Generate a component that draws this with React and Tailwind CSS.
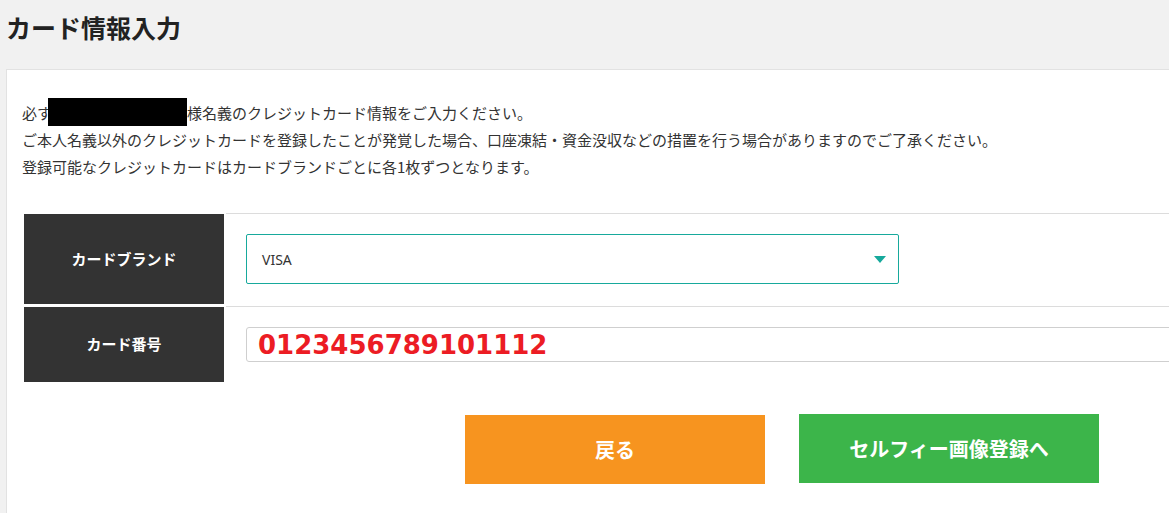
export default function App() {
  const jp = { fontFamily: '"Noto Sans CJK JP", "Noto Sans", sans-serif' };

  return (
    <div className="w-[1169px] h-[513px] overflow-hidden bg-[#f1f1f1] text-[#333]" style={jp}>
      <h1 className="pl-[6px] pt-[11px] h-[69px] text-[25px] leading-[32px] font-bold text-[#222]">カード情報入力</h1>

      <div className="ml-[6px] w-[1200px] h-[444px] bg-white border-t border-l border-[#e2e2e2] pl-[15px] pt-[28px]">
        <div className="text-[15px] leading-[27px] text-[#333]">
          <p className="flex items-center">
            必す<span className="inline-block w-[139px] h-[28px] bg-black -ml-[4px]"></span>様名義のクレジットカード情報をご入力ください。
          </p>
          <p>ご本人名義以外のクレジットカードを登録したことが発覚した場合、口座凍結・資金没収などの措置を行う場合がありますのでご了承ください。</p>
          <p>登録可能なクレジットカードはカードブランドごとに各1枚ずつとなります。</p>
        </div>

        <div className="mt-[33px] ml-[2px] flex flex-col">
          <div className="flex gap-[2px]">
            <div className="w-[200px] h-[90px] mt-[1px] bg-[#333] flex items-center justify-center text-white text-[15px] font-bold">カードブランド</div>
            <div className="flex-1 border-t border-[#dcdcdc] h-[93px] pl-[20px] pt-[20px]">
              <div className="w-[653px] h-[50px] border border-[#17a99c] rounded-[2px] flex items-center justify-between pl-[15px] pr-[12px]">
                <span className="text-[14px] text-[#333]" style={{ fontFamily: '"Noto Sans", sans-serif' }}>VISA</span>
                <svg width="12" height="7" viewBox="0 0 12 7">
                  <path d="M0 0 H12 L6 7 Z" fill="#16a99c" />
                </svg>
              </div>
            </div>
          </div>
          <div className="flex gap-[2px]">
            <div className="w-[200px] h-[75px] mt-[1px] bg-[#333] flex items-center justify-center text-white text-[15px] font-bold">カード番号</div>
            <div className="flex-1 border-t border-[#dcdcdc] pl-[20px] pt-[20px]">
              <div className="h-[35px] border border-[#cfcfcf] rounded-[3px] flex items-center pl-[11px]">
                <span className="text-[26px] font-bold text-[#ec1c24] leading-none" style={{ fontFamily: '"DejaVu Sans", sans-serif' }}>0123456789101112</span>
              </div>
            </div>
          </div>
        </div>

        <div className="mt-[32px] ml-[443px] flex items-start gap-[34px]">
          <button className="w-[300px] h-[69px] mt-[1px] bg-[#f7941f] text-white text-[20px] font-bold">戻る</button>
          <button className="w-[300px] h-[69px] bg-[#3cb54a] text-white text-[20px] font-bold">セルフィー画像登録へ</button>
        </div>
      </div>
    </div>
  );
}
